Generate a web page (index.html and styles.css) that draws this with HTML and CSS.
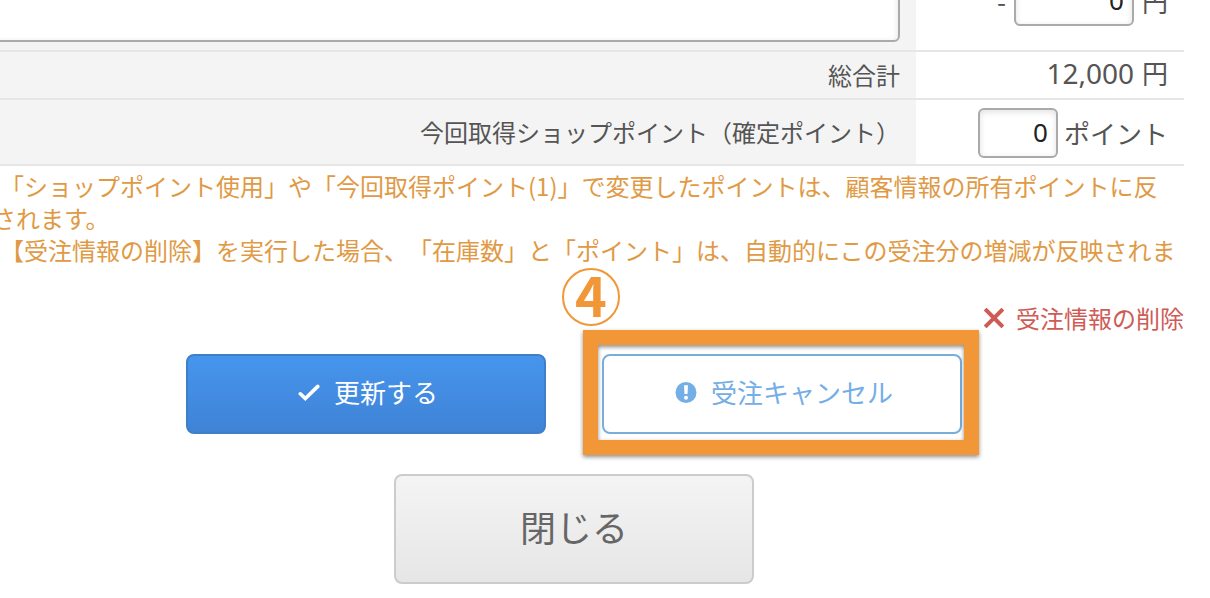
FILE: index.html
```html
<!DOCTYPE html>
<html lang="ja">
<head>
<meta charset="utf-8">
<title>受注情報</title>
<link rel="stylesheet" href="styles.css">
</head>
<body>
<main class="order">
  <table class="totals">
    <colgroup><col><col class="value-col"></colgroup>
    <tr class="row-discount">
      <th scope="row"><textarea class="field memo" aria-label="メモ"></textarea></th>
      <td><div class="value"><span>-</span><input class="field amount" type="text" value="0" aria-label="値引き"><span>円</span></div></td>
    </tr>
    <tr class="row-total">
      <th scope="row">総合計</th>
      <td><div class="value"><span class="number">12,000</span><span>円</span></div></td>
    </tr>
    <tr class="row-points">
      <th scope="row"><label for="points">今回取得ショップポイント（確定ポイント）</label></th>
      <td><div class="value"><input class="field points" id="points" type="text" value="0"><span>ポイント</span></div></td>
    </tr>
  </table>

  <div class="notes">
    <p>「ショップポイント使用」や「今回取得ポイント(1)」で変更したポイントは、顧客情報の所有ポイントに反<br>されます。</p>
    <p>【受注情報の削除】を実行した場合、「在庫数」と「ポイント」は、自動的にこの受注分の増減が反映されま</p>
  </div>

  <div class="delete-row">
    <a class="delete" href="#">
      <svg class="icon-delete" viewBox="0 0 20 20" aria-hidden="true"><path d="M2.5 2.5L17.5 17.5M17.5 2.5L2.5 17.5" fill="none" stroke="currentColor" stroke-width="4" stroke-linecap="square"/></svg>
      <span>受注情報の削除</span>
    </a>
  </div>

  <div class="actions">
    <button class="button update" type="button">
      <svg class="icon" viewBox="0 0 22 22" aria-hidden="true"><path d="M2.3 12.8L7.3 17.6L19.8 5.4" fill="none" stroke="currentColor" stroke-width="3.6" stroke-linecap="round" stroke-linejoin="miter"/></svg>
      <span>更新する</span>
    </button>
    <div class="marked">
      <button class="button cancel" type="button">
        <svg class="icon" viewBox="0 0 22 22" aria-hidden="true"><circle cx="11" cy="11.5" r="10.5" fill="currentColor"/><path d="M9 4.2h4l-.5 8.8h-3z" fill="#fff"/><circle cx="11" cy="16.8" r="2" fill="#fff"/></svg>
        <span>受注キャンセル</span>
      </button>
      <span class="frame"></span>
      <span class="step">4</span>
    </div>
  </div>

  <div class="close-row">
    <button class="button close" type="button">閉じる</button>
  </div>
</main>
</body>
</html>
```
FILE: styles.css
```css
* {
  box-sizing: border-box;
}

body {
  margin: 0;
  background: #fff;
  color: #555;
  font-family: "Noto Sans CJK JP", sans-serif;
  font-size: 24px;
  line-height: 32px;
  font-weight: 400;
  text-spacing-trim: space-all;
  overflow: hidden;
}

button,
input,
textarea {
  font: inherit;
}

/* The form is scrolled a little down and to the right. */
.order {
  margin: -40px 26px 0 -36px;
}

.totals {
  width: 100%;
  border-collapse: separate;
  border-spacing: 0;
  table-layout: fixed;
}

.value-col {
  width: 268px;
}

.totals th,
.totals td {
  padding: 0 16px;
  border-bottom: 2px solid #e6e6e6;
  text-align: right;
  font-weight: inherit;
}

.totals th {
  background: #f4f4f4;
}

.totals td {
  font-size: 26px;
}

.totals .row-discount th,
.totals .row-discount td {
  height: 92px;
  vertical-align: top;
}

.totals .row-discount th {
  padding-top: 8px;
}

.totals .row-discount td {
  padding-top: 16px;
}

.row-total th,
.row-total td {
  height: 48px;
}

.totals .row-total td {
  padding-bottom: 4px;
}

.row-points th,
.row-points td {
  height: 66px;
}

.totals .row-points td {
  padding-top: 2px;
}

.value {
  display: flex;
  justify-content: flex-end;
  align-items: center;
  gap: 8px;
}

.row-points .value {
  gap: 6px;
}

.number {
  font-family: "Noto Sans", "Noto Sans CJK JP", sans-serif;
  font-size: 28px;
}

.field {
  border: 2px solid #aaa;
  border-radius: 6px;
  background: #fff;
  box-shadow: inset 0 2px 6px rgba(0, 0, 0, 0.12);
  color: #222;
}

.memo {
  display: block;
  width: 100%;
  height: 74px;
  resize: none;
}

.amount,
.points {
  height: 50px;
  padding: 0 8px 2px;
  font-family: "Noto Sans", "Noto Sans CJK JP", sans-serif;
  text-align: right;
}

.amount {
  width: 120px;
}

.points {
  width: 80px;
}

.notes {
  margin: 4px 0 36px 28px;
  color: #e09a45;
}

.notes p {
  margin: 0;
  text-indent: 8px;
}

.delete-row {
  display: flex;
  justify-content: flex-end;
}

.delete {
  display: flex;
  align-items: center;
  gap: 12px;
  color: #cf5b56;
  text-decoration: none;
}

.icon-delete {
  width: 20px;
  height: 20px;
}

.actions {
  display: flex;
  justify-content: center;
  gap: 56px;
  margin-top: 20px;
}

.button {
  display: flex;
  align-items: center;
  justify-content: center;
  gap: 14px;
  width: 360px;
  height: 80px;
  padding: 0 0 4px 4px;
  border: 2px solid;
  border-radius: 8px;
  font-size: 26px;
}

.icon {
  width: 22px;
  height: 22px;
}

.update {
  border-color: #3f7fca;
  background: linear-gradient(#4695ed, #3f83d6);
  color: #fff;
}

.cancel {
  border-color: #7aaddb;
  background: #fff;
  color: #74aee6;
}

.marked {
  position: relative;
}

.frame {
  position: absolute;
  inset: -24px -17px -21px -19px;
  border: 15px solid #f19737;
  filter: drop-shadow(0 2px 2px rgba(0, 0, 0, 0.45));
  pointer-events: none;
}

.step {
  position: absolute;
  left: -40px;
  top: -86px;
  display: flex;
  align-items: center;
  justify-content: center;
  width: 58px;
  height: 58px;
  padding-bottom: 6px;
  border: 2px solid #f19737;
  border-radius: 50%;
  color: #f19737;
  font-size: 54px;
  font-weight: 700;
}

.close-row {
  display: flex;
  justify-content: center;
  margin-top: 40px;
}

.close {
  height: 110px;
  padding: 0 0 6px;
  border-color: #ccc;
  background: linear-gradient(#f4f4f4, #e6e6e6);
  color: #666;
  font-size: 36px;
}
```
